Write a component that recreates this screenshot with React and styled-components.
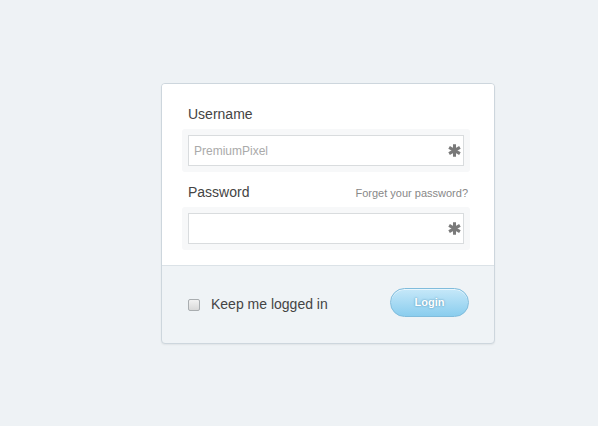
import React from "react";
import styled, { createGlobalStyle } from "styled-components";

const Global = createGlobalStyle`
  html, body { margin: 0; padding: 0; background: #eef2f5; }
  body { font-family: Arial, "Liberation Sans", sans-serif; }
  * { box-sizing: border-box; }
`;

const Page = styled.div`
  padding: 83px 0 0 161px;
  min-height: 426px;
`;

const Card = styled.form`
  width: 334px;
  border: 1px solid #cdd6dd;
  border-radius: 4px;
  background: #eff3f6;
  box-shadow: 0 1px 2px rgba(0, 0, 0, 0.06);
  overflow: hidden;
`;

const Body = styled.div`
  background: #fff;
  padding: 22px 24px 15px 20px;
  border-bottom: 1px solid #dbe2e7;
`;

const LabelRow = styled.div`
  display: flex;
  align-items: baseline;
  justify-content: space-between;
  padding: 0 2px 0 6px;
  margin-top: ${(p) => p.$top || 0}px;
  height: 16px;
  margin-bottom: 7px;
`;

const Label = styled.label`
  font-size: 14px;
  line-height: 16px;
  color: #444;
`;

const Forgot = styled.a`
  font-size: 11px;
  color: #888;
  text-decoration: none;
`;

const FieldWrap = styled.div`
  width: 288px;
  padding: 6px;
  background: #f7f8f9;
  border-radius: 3px;
  position: relative;
`;

const Input = styled.input`
  display: block;
  width: 100%;
  height: 31px;
  border: 1px solid #d9dcde;
  background: #fff;
  padding: 0 24px 0 5px;
  font-family: Arial, "Liberation Sans", sans-serif;
  font-size: 12px;
  color: #555;
  outline: none;
  &::placeholder { color: #aaa; }
`;

const Star = styled.svg`
  position: absolute;
  right: 9px;
  top: 15px;
  width: 13px;
  height: 13px;
`;

const Footer = styled.div`
  height: 77px;
  display: flex;
  align-items: center;
  padding: 0 25px 2px 26px;
`;

const Check = styled.span`
  width: 12px;
  height: 12px;
  border: 1px solid #a9adb0;
  border-radius: 2px;
  background: linear-gradient(#f2f2f2, #d9d9d9);
  margin-right: 11px;
  margin-top: 2px;
`;

const CheckText = styled.span`
  font-size: 14px;
  color: #444;
  flex: 1;
`;

const Button = styled.button`
  width: 79px;
  height: 29px;
  border-radius: 15px;
  border: 1px solid #80bcdc;
  background: linear-gradient(#c6e8f9, #8acdee);
  color: #fff;
  font-family: Arial, "Liberation Sans", sans-serif;
  font-weight: bold;
  font-size: 11px;
  text-shadow: 0 0 2px rgba(40, 110, 150, 0.75);
  box-shadow: inset 0 1px 0 rgba(255, 255, 255, 0.6);
  margin-top: -3px;
  padding: 0;
`;

const Asterisk = () => (
  <Star viewBox="0 0 12 12">
    <g stroke="#7a7a7a" strokeWidth="2.8" strokeLinecap="butt">
      <line x1="6" y1="0.3" x2="6" y2="11.7" />
      <line x1="1" y1="3.1" x2="11" y2="8.9" />
      <line x1="1" y1="8.9" x2="11" y2="3.1" />
    </g>
  </Star>
);

export default function App() {
  return (
    <>
      <Global />
      <Page>
        <Card onSubmit={(e) => e.preventDefault()}>
          <Body>
            <LabelRow>
              <Label>Username</Label>
            </LabelRow>
            <FieldWrap>
              <Input placeholder="PremiumPixel" />
              <Asterisk />
            </FieldWrap>
            <LabelRow $top={12}>
              <Label>Password</Label>
              <Forgot href="#">Forget your password?</Forgot>
            </LabelRow>
            <FieldWrap>
              <Input type="password" />
              <Asterisk />
            </FieldWrap>
          </Body>
          <Footer>
            <Check />
            <CheckText>Keep me logged in</CheckText>
            <Button type="submit">Login</Button>
          </Footer>
        </Card>
      </Page>
    </>
  );
}
